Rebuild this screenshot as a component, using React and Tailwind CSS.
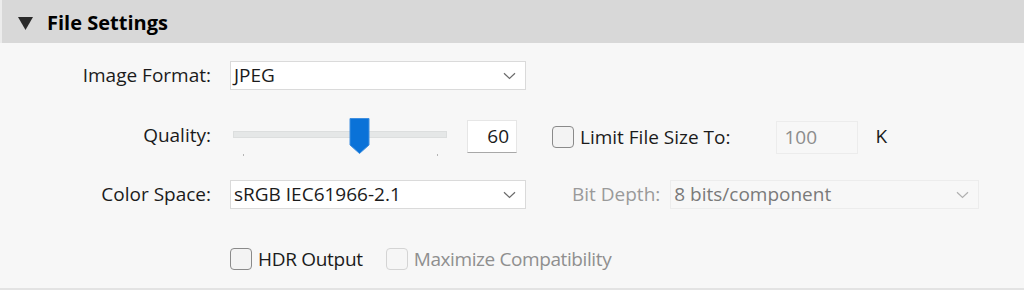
import React from "react";

function Chevron({ color = "#6b6b6b" }) {
  return (
    <svg width="13" height="8" viewBox="0 0 13 8" fill="none">
      <path d="M1 1.2 L6.5 6.5 L12 1.2" stroke={color} strokeWidth="1.2" />
    </svg>
  );
}

function Check({ disabled }) {
  return (
    <div
      className={
        "w-[22px] h-[22px] rounded-[4px] border " +
        (disabled ? "border-[#d4d4d4] bg-[#f6f6f6]" : "border-[#8a8a8a] bg-[#f3f3f3]")
      }
    />
  );
}

export default function App() {
  return (
    <div
      className="w-[1024px] h-[290px] bg-[#f7f7f7] text-[#1b1b1b] overflow-hidden flex flex-col"
      style={{ fontFamily: '"Open Sans", "Noto Sans", sans-serif' }}
    >
      <div className="h-[43px] bg-[#d8d8d8] border-l-2 border-[#ececec] flex items-center pl-[16px] pt-[3px] shrink-0">
        <svg width="15" height="13" viewBox="0 0 15 13">
          <path d="M0 0 H15 L7.5 13 Z" fill="#2a2a2a" />
        </svg>
        <span className="ml-[14px] text-[20px] font-bold text-black leading-none">File Settings</span>
      </div>

      <div className="flex-1 border-b-2 border-[#e3e3e3] flex flex-col">
        {/* Row 1 */}
        <div className="flex items-center mt-[18px] h-[29px]">
          <div className="w-[211px] text-right text-[19px]">Image Format:</div>
          <div className="ml-[19px] w-[296px] h-[29px] bg-white border border-[#dadada] flex items-center justify-between pl-[3px] pr-[9px] text-[19px]">
            <span>JPEG</span>
            <Chevron />
          </div>
        </div>

        {/* Row 2 */}
        <div className="flex items-start mt-[28px] h-[37px]">
          <div className="w-[211px] text-right text-[19px] mt-[3px]">Quality:</div>
          <div className="ml-[19px] relative w-[225px] h-[37px]">
            <div className="absolute left-[3px] top-[13px] w-[214px] h-[7px] bg-[#e5e7e7] border border-[#dcdede]" />
            <div className="absolute left-[13px] top-[36px] w-[1px] h-[2px] bg-[#b5b5b5]" />
            <div className="absolute left-[207px] top-[36px] w-[1px] h-[2px] bg-[#b5b5b5]" />
            <svg className="absolute left-[119px] top-0" width="21" height="36" viewBox="0 0 21 36">
              <path d="M1 0.5 H20 V27 L10.5 35.5 L1 27 Z" fill="#0a72d8" stroke="#3f8fe0" strokeWidth="1" />
            </svg>
          </div>
          <div className="ml-[12px] mt-[2px] w-[50px] h-[33px] bg-white border border-[#e6e6e6] border-b-[#a8a8a8] flex items-center justify-end pr-[7px] text-[19px]">
            60
          </div>
          <div className="ml-[35px] mt-[5px] flex items-center">
            <Check />
            <span className="ml-[6px] text-[19px]">Limit File Size To:</span>
          </div>
          <div className="ml-[46px] mt-[3px] w-[82px] h-[33px] border border-[#ececec] bg-[#f7f7f7] flex items-center pl-[7px] text-[19px] text-[#8c8c8c]">
            100
          </div>
          <div className="ml-[17px] mt-[4px] text-[19px]">K</div>
        </div>

        {/* Row 3 */}
        <div className="flex items-center mt-[25px] h-[29px]">
          <div className="w-[211px] text-right text-[19px]">Color Space:</div>
          <div className="ml-[19px] w-[296px] h-[29px] bg-white border border-[#dadada] flex items-center justify-between pl-[3px] pr-[9px] text-[19px]">
            <span>sRGB IEC61966-2.1</span>
            <Chevron />
          </div>
          <div className="ml-[46px] text-[19px] text-[#9a9a9a]">Bit Depth:</div>
          <div className="ml-[10px] w-[309px] h-[29px] bg-[#f7f7f7] border border-[#ececec] flex items-center justify-between pl-[3px] pr-[9px] text-[19px] text-[#7a7a7a]">
            <span>8 bits/component</span>
            <Chevron color="#b0b0b0" />
          </div>
        </div>

        {/* Row 4 */}
        <div className="flex items-center mt-[39px] ml-[230px] h-[22px]">
          <Check />
          <span className="ml-[6px] text-[19px] tracking-[-0.3px]">HDR Output</span>
          <div className="ml-[23px]">
            <Check disabled />
          </div>
          <span className="ml-[6px] text-[19px] text-[#8f8f8f] tracking-[-0.4px]">Maximize Compatibility</span>
        </div>
      </div>
    </div>
  );
}
